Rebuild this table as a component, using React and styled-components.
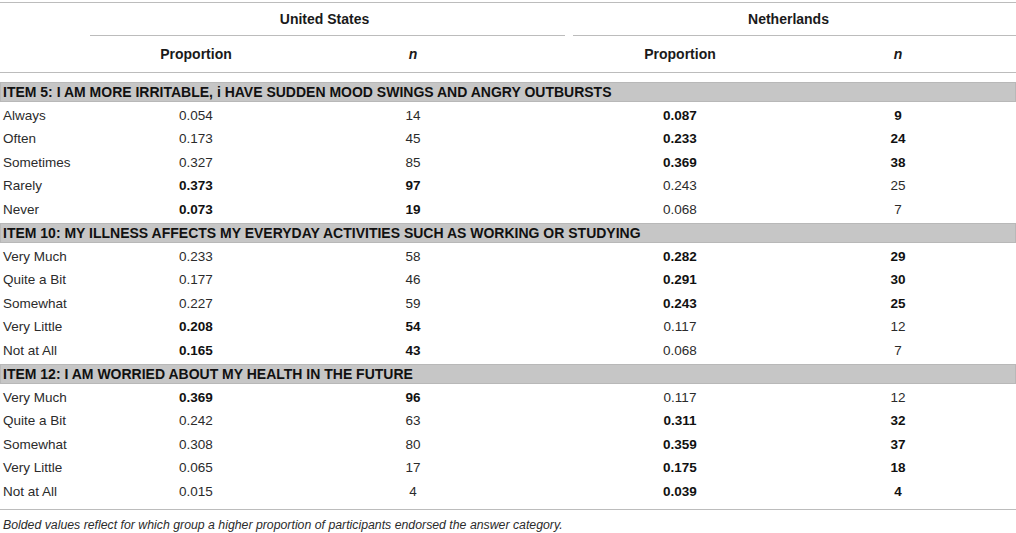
import React from 'react'
import styled, {createGlobalStyle} from 'styled-components'

const GlobalStyle = createGlobalStyle`
  body {
    margin: 0;
    background: #fff;
    font-family: "Liberation Sans", Arial, sans-serif;
    color: #2b2b2b;
  }
`;

const COLS = '146px 100px 334px 200px 236px';

const sections = [
    {
        title: 'ITEM 5: I AM MORE IRRITABLE, i HAVE SUDDEN MOOD SWINGS AND ANGRY OUTBURSTS',
        rows: [
            ['Always', '0.054', '14', '0.087', '9', 'nl'],
            ['Often', '0.173', '45', '0.233', '24', 'nl'],
            ['Sometimes', '0.327', '85', '0.369', '38', 'nl'],
            ['Rarely', '0.373', '97', '0.243', '25', 'us'],
            ['Never', '0.073', '19', '0.068', '7', 'us'],
        ]
    },
    {
        title: 'ITEM 10: MY ILLNESS AFFECTS MY EVERYDAY ACTIVITIES SUCH AS WORKING OR STUDYING',
        rows: [
            ['Very Much', '0.233', '58', '0.282', '29', 'nl'],
            ['Quite a Bit', '0.177', '46', '0.291', '30', 'nl'],
            ['Somewhat', '0.227', '59', '0.243', '25', 'nl'],
            ['Very Little', '0.208', '54', '0.117', '12', 'us'],
            ['Not at All', '0.165', '43', '0.068', '7', 'us'],
        ]
    },
    {
        title: 'ITEM 12: I AM WORRIED ABOUT MY HEALTH IN THE FUTURE',
        rows: [
            ['Very Much', '0.369', '96', '0.117', '12', 'us'],
            ['Quite a Bit', '0.242', '63', '0.311', '32', 'nl'],
            ['Somewhat', '0.308', '80', '0.359', '37', 'nl'],
            ['Very Little', '0.065', '17', '0.175', '18', 'nl'],
            ['Not at All', '0.015', '4', '0.039', '4', 'nl'],
        ]
    },
];

export default function App() {
    return (
        <Page>
            <GlobalStyle/>
            <TableWrap>
                <GroupRow>
                    <span/>
                    <GroupHead pad={6}>United States</GroupHead>
                    <span/>
                    <GroupHead pad={12}>Netherlands</GroupHead>
                </GroupRow>
                <SubRow>
                    <span/>
                    <SubHead>Proportion</SubHead>
                    <SubHead italic>n</SubHead>
                    <SubHead>Proportion</SubHead>
                    <SubHead italic>n</SubHead>
                </SubRow>
                <Body>
                    {sections.map(s =>
                        <Section key={s.title}>
                            <Band>{s.title}</Band>
                            {s.rows.map(r =>
                                <Row key={r[0]}>
                                    <Label>{r[0]}</Label>
                                    <Cell bold={r[5] === 'us'}>{r[1]}</Cell>
                                    <Cell bold={r[5] === 'us'}>{r[2]}</Cell>
                                    <Cell bold={r[5] === 'nl'}>{r[3]}</Cell>
                                    <Cell bold={r[5] === 'nl'}>{r[4]}</Cell>
                                </Row>
                            )}
                        </Section>
                    )}
                </Body>
            </TableWrap>
            <Note>Bolded values reflect for which group a higher proportion of participants endorsed the answer category.</Note>
        </Page>
    )
}

const Page = styled.div`
  width: 1016px;
  padding-top: 2px;
`;
const TableWrap = styled.div`
  border-top: 1px solid #bcbcbc;
  border-bottom: 1px solid #bcbcbc;
`;
const GroupRow = styled.div`
  display: grid;
  grid-template-columns: 90px 475px 8px 443px;
  height: 33px;
`;
const GroupHead = styled.div`
  display: flex;
  align-items: center;
  justify-content: center;
  padding-right: ${p => p.pad}px;
  border-bottom: 1px solid #bcbcbc;
  font-size: 14px;
  font-weight: bold;
  color: #1a1a1a;
`;
const SubRow = styled.div`
  display: grid;
  grid-template-columns: ${COLS};
  height: 36px;
  border-bottom: 1px solid #bcbcbc;
`;
const SubHead = styled.div`
  display: flex;
  align-items: center;
  justify-content: center;
  font-size: 14px;
  font-weight: bold;
  font-style: ${p => p.italic ? 'italic' : 'normal'};
  color: #1a1a1a;
`;
const Body = styled.div`
  padding: 7px 0 6px;
`;
const Section = styled.div`
  display: flex;
  flex-direction: column;
`;
const Band = styled.div`
  height: 20px;
  margin: 2px 0 1.5px;
  padding-left: 3px;
  display: flex;
  align-items: center;
  background: #c6c6c6;
  box-shadow: inset 0 0 0 1px #b8b8b8;
  font-size: 14px;
  font-weight: bold;
  color: #111;
`;
const Row = styled.div`
  display: grid;
  grid-template-columns: ${COLS};
  height: 23.5px;
  align-items: center;
  font-size: 13.5px;
`;
const Label = styled.div`
  padding-left: 3px;
  white-space: nowrap;
`;
const Cell = styled.div`
  text-align: center;
  font-weight: ${p => p.bold ? 'bold' : 'normal'};
  color: ${p => p.bold ? '#111' : '#2b2b2b'};
`;
const Note = styled.div`
  padding: 8px 0 0 3px;
  font-size: 12.3px;
  font-style: italic;
  color: #2b2b2b;
`;
